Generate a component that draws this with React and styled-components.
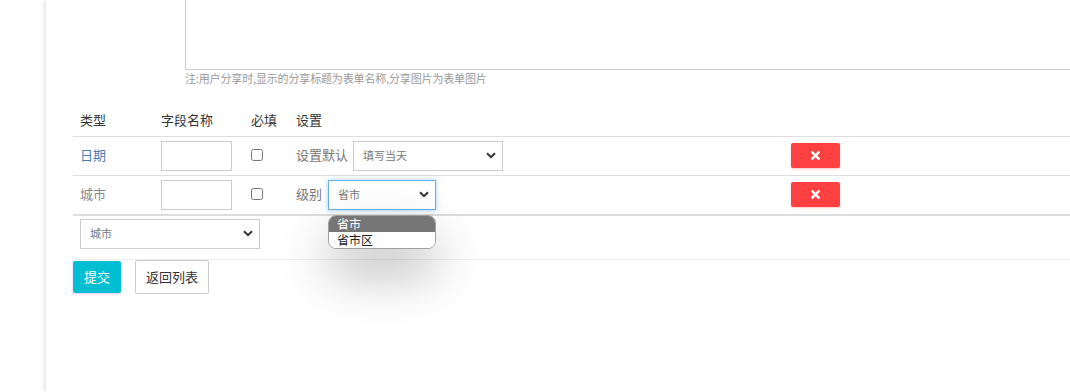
import styled, { createGlobalStyle } from "styled-components";
import { FaTimes } from "react-icons/fa";

const GlobalStyle = createGlobalStyle`
  html, body {
    margin: 0;
    padding: 0;
    background: #fff;
    font-family: "Noto Sans CJK SC", "Liberation Sans", sans-serif;
    color: #333;
  }
`;

const Page = styled.div`
  display: flex;
  height: 392px;
  overflow: hidden;
`;

const Sidebar = styled.div`
  width: 46px;
  flex-shrink: 0;
  background: #fff;
`;

const Main = styled.div`
  flex: 1;
  position: relative;
  overflow: hidden;
  padding-left: 27px;
  box-shadow: -2px 0 4px rgba(0, 0, 0, 0.1);
`;

const ShareBlock = styled.div`
  margin-left: 112px;
  margin-top: -21px;
`;

const TextArea = styled.div`
  width: 920px;
  height: 89px;
  border: 1px solid #ccc;
`;

const Note = styled.div`
  font-size: 11px;
  line-height: 16px;
  letter-spacing: -0.15px;
  color: #999;
`;

const Table = styled.div`
  margin-top: 22px;
`;

const Row = styled.div`
  display: grid;
  grid-template-columns: 81px 90px 45px 495px 1fr;
  align-items: center;
  height: ${(p) => p.$h || 38}px;
  border-bottom: ${(p) => p.$border || "1px solid #ddd"};
`;

const Cell = styled.div`
  padding: 0 7px;
  display: flex;
  align-items: center;
  gap: ${(p) => p.$gap || 0}px;
  font-size: 13px;
  color: ${(p) => p.$color || "#333"};
`;

const Text = styled.span`
  margin-bottom: ${(p) => p.$lift || 4}px;
`;

const FieldInput = styled.div`
  width: 69px;
  height: 28px;
  border: 1px solid #ccc;
`;

const Check = styled.span`
  display: inline-block;
  width: 10px;
  height: 10px;
  margin-bottom: 2px;
  border: 1px solid #767676;
  border-radius: 2.5px;
`;

const SelectWrap = styled.div`
  position: relative;
`;

const SelectBox = styled.div`
  box-sizing: border-box;
  width: ${(p) => p.$w}px;
  height: 30px;
  display: flex;
  align-items: center;
  justify-content: space-between;
  padding: 0 6px 2px 9px;
  font-size: 11px;
  color: #777;
  border: 1px solid ${(p) => (p.$focus ? "#66afe9" : "#ccc")};
  box-shadow: ${(p) => (p.$focus ? "0 0 5px rgba(102, 175, 233, 0.6)" : "none")};
  background: #fff;
`;

const Chevron = () => (
  <svg width="10" height="7" viewBox="0 0 10 7">
    <path d="M1 1.2 5 5.2 9 1.2" fill="none" stroke="#333" strokeWidth="2" />
  </svg>
);

const Popup = styled.div`
  position: absolute;
  left: 0;
  top: calc(100% + 5px);
  width: 108px;
  box-sizing: border-box;
  border: 1px solid #a0a0a0;
  border-radius: 8px;
  overflow: hidden;
  background: #fff;
  box-shadow: 0 24px 50px rgba(0, 0, 0, 0.3);
  z-index: 5;
`;

const Option = styled.div`
  height: 16px;
  line-height: 15px;
  padding-left: 8px;
  font-size: 12px;
  color: ${(p) => (p.$active ? "#fff" : "#222")};
  background: ${(p) => (p.$active ? "#767676" : "#fff")};
`;

const DeleteBtn = styled.div`
  width: 49px;
  height: 25px;
  margin-bottom: 1px;
  border-radius: 2px;
  background: #ff4040;
  color: #fff;
  display: flex;
  align-items: center;
  justify-content: center;
  box-shadow: 0 1px 2px rgba(255, 64, 64, 0.3);
`;

const FootRow = styled.div`
  padding: 3px 7px 10px;
  border-bottom: 1px solid #eee;
`;

const Actions = styled.div`
  display: flex;
  align-items: center;
  gap: 14px;
`;

const Button = styled.div`
  padding: 0 ${(p) => (p.$primary ? 11 : 10)}px 2px;
  box-sizing: border-box;
  display: flex;
  align-items: center;
  font-size: 13px;
  border-radius: 2px;
  color: ${(p) => (p.$primary ? "#fff" : "#333")};
  background: ${(p) => (p.$primary ? "#00bfd2" : "#fff")};
  border: ${(p) => (p.$primary ? "none" : "1px solid #ccc")};
  height: ${(p) => (p.$primary ? 32 : 34)}px;
  box-shadow: ${(p) => (p.$primary ? "0 1px 3px rgba(200, 80, 220, 0.35)" : "none")};
`;

function App() {
  return (
    <>
      <GlobalStyle />
      <Page>
        <Sidebar />
        <Main>
          <ShareBlock>
            <TextArea />
            <Note>注:用户分享时,显示的分享标题为表单名称,分享图片为表单图片</Note>
          </ShareBlock>

          <Table>
            <Row $h={28}>
              <Cell><Text $lift={6}>类型</Text></Cell>
              <Cell><Text $lift={6}>字段名称</Text></Cell>
              <Cell><Text $lift={6}>必填</Text></Cell>
              <Cell><Text $lift={6}>设置</Text></Cell>
              <Cell />
            </Row>

            <Row>
              <Cell $color="#4a7db5"><Text>日期</Text></Cell>
              <Cell>
                <FieldInput />
              </Cell>
              <Cell>
                <Check />
              </Cell>
              <Cell $gap={5} $color="#777">
                <Text>设置默认</Text>
                <SelectBox $w={150}>
                  <span>填写当天</span>
                  <Chevron />
                </SelectBox>
              </Cell>
              <Cell>
                <DeleteBtn>
                  <FaTimes size={13} />
                </DeleteBtn>
              </Cell>
            </Row>

            <Row $border="2px solid #ddd">
              <Cell $color="#888"><Text>城市</Text></Cell>
              <Cell>
                <FieldInput />
              </Cell>
              <Cell>
                <Check />
              </Cell>
              <Cell $gap={6} $color="#777">
                <Text>级别</Text>
                <SelectWrap>
                  <SelectBox $w={108} $focus>
                    <span>省市</span>
                    <Chevron />
                  </SelectBox>
                  <Popup>
                    <Option $active>省市</Option>
                    <Option>省市区</Option>
                  </Popup>
                </SelectWrap>
              </Cell>
              <Cell>
                <DeleteBtn>
                  <FaTimes size={13} />
                </DeleteBtn>
              </Cell>
            </Row>

            <FootRow>
              <SelectBox $w={180}>
                <span>城市</span>
                <Chevron />
              </SelectBox>
            </FootRow>
          </Table>

          <Actions>
            <Button $primary>提交</Button>
            <Button>返回列表</Button>
          </Actions>
        </Main>
      </Page>
    </>
  );
}

export default App;
